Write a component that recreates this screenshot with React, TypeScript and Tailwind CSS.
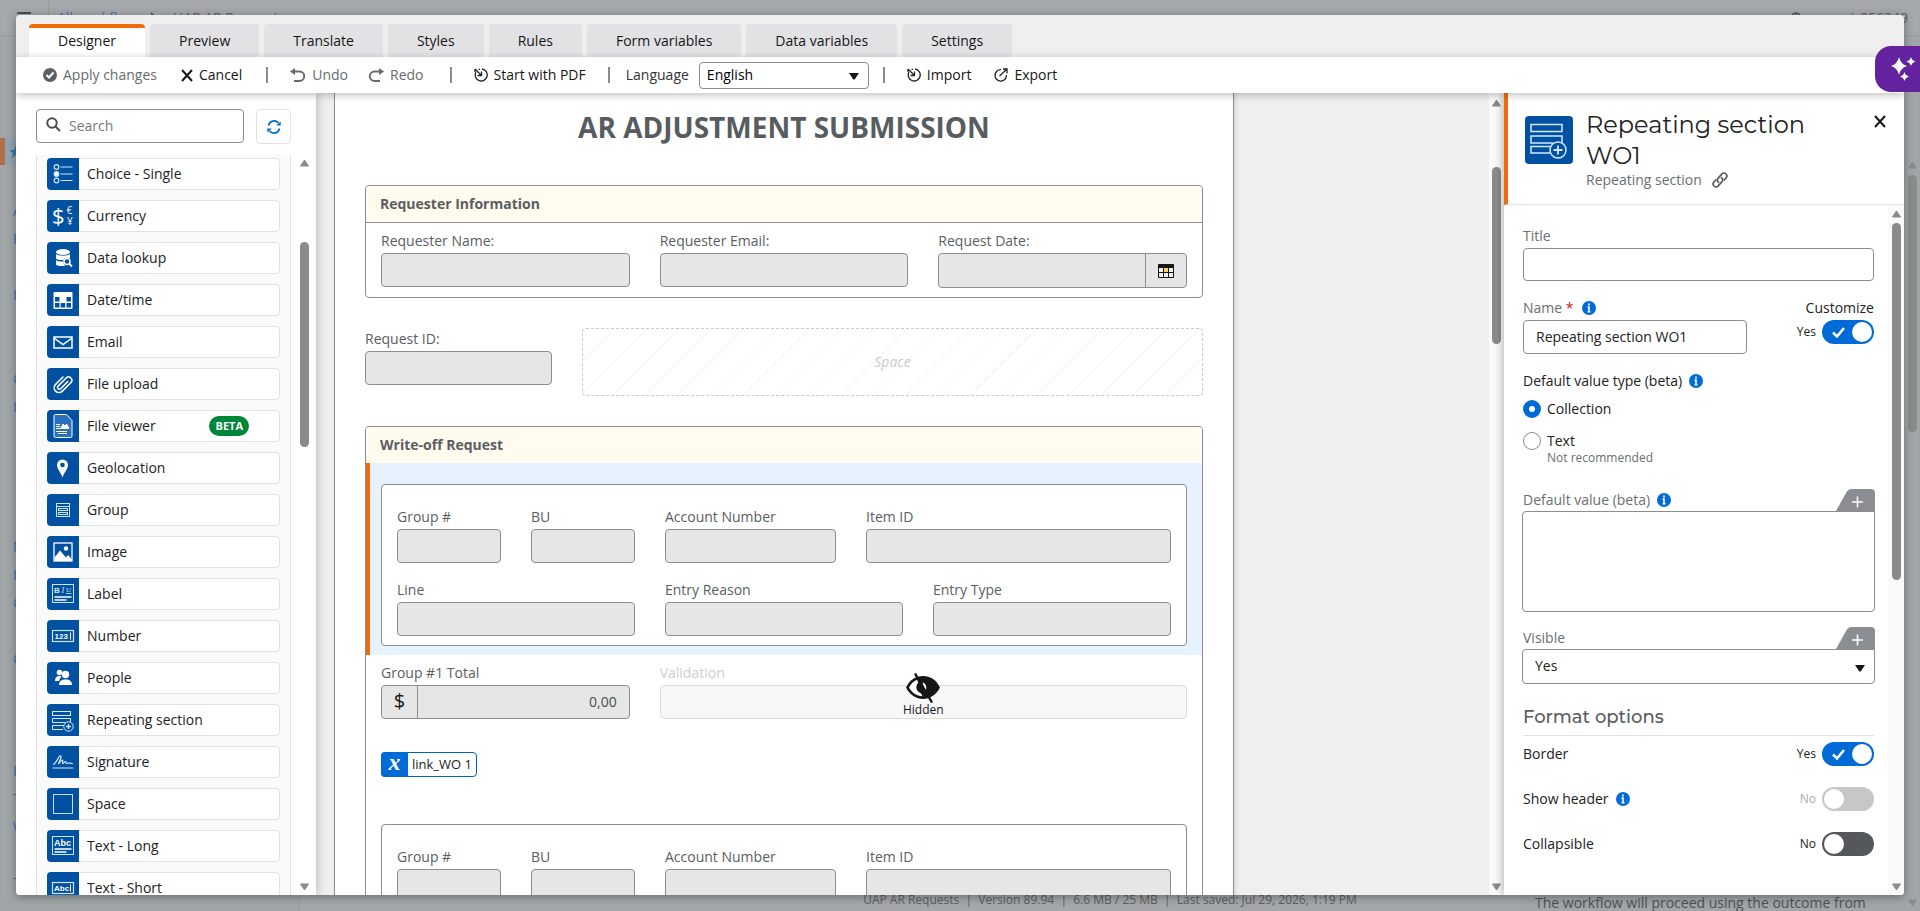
import React, { useId } from 'react';
import clsx from 'clsx';

const TABS = ['Designer', 'Preview', 'Translate', 'Styles', 'Rules', 'Form variables', 'Data variables', 'Settings'];

const line = { fill: 'none', stroke: '#cfe4fb', strokeWidth: 1.2 };

const SectionGlyph = () => (
  <g fill="none" stroke="#d5e8fc" strokeWidth="1">
    <rect x="5.5" y="7.5" width="18" height="4" />
    <path d="M23.5 18v-3.500h-18v4h13M17 21.500H5.500v4H16" />
    <circle cx="21.500" cy="22.500" r="4.700" />
    <path d="M21.500 20v5M19 22.500h5" strokeWidth="1.300" />
  </g>
);

const CONTROLS: { name: string; beta?: boolean; icon: React.ReactNode }[] = [
  {
    name: 'Choice - Single',
    icon: (
      <g {...line}>
        <circle cx="9.500" cy="9" r="2.300" />
        <circle cx="9.500" cy="16" r="2.300" fill="#fff" />
        <circle cx="9.500" cy="22.500" r="2.300" />
        <path d="M13.500 9h12M13.500 16h12M13.500 22.500h12" />
      </g>
    ),
  },
  {
    name: 'Currency',
    icon: (
      <g fill="#fff" fontFamily="Open Sans, sans-serif">
        <text x="5" y="24" fontSize="22">$</text>
        <text x="19.500" y="14" fontSize="10">€</text>
        <text x="20" y="25" fontSize="10">¥</text>
      </g>
    ),
  },
  {
    name: 'Data lookup',
    icon: (
      <g>
        <ellipse cx="16" cy="10" rx="7" ry="3" fill="#fff" />
        <path d="M9 12c2 2.200 12 2.200 14 0v4.500c-2-1.500-6-.5-6.500 1.500-3 .2-6.500-.2-7.500-1.500zM9 18c1.500 1.600 5 1.700 7.300 1.500 0 1.800.7 3.200 2 4.200-3 .8-8 .5-9.300-1.200z" fill="#fff" />
        <circle cx="20" cy="19.500" r="3" fill="none" stroke="#fff" strokeWidth="1.500" />
        <path d="M22 21.500l3 3" stroke="#fff" strokeWidth="1.800" />
      </g>
    ),
  },
  {
    name: 'Date/time',
    icon: (
      <g>
        <rect x="6.500" y="8" width="19" height="17" rx="1" fill="#fff" />
        <g fill="#0051a2">
          <rect x="8" y="13" width="4.500" height="4.500" />
          <rect x="19.500" y="13" width="4.500" height="4.500" />
          <rect x="8" y="19" width="4.500" height="4.500" />
          <rect x="13.700" y="19" width="4.500" height="4.500" />
          <rect x="19.500" y="19" width="4.500" height="4.500" />
        </g>
      </g>
    ),
  },
  {
    name: 'Email',
    icon: (
      <g fill="none" stroke="#fff" strokeWidth="1.500">
        <rect x="7" y="11" width="18" height="11" />
        <path d="M7 12l9 6.500 9-6.500" />
      </g>
    ),
  },
  {
    name: 'File upload',
    icon: (
      <g fill="none" stroke="#fff" strokeWidth="1.500" strokeLinecap="round" transform="rotate(45 16 16)">
        <path d="M11 11v10.500a4.800 4.800 0 0 0 9.600 0V9.500a3.300 3.300 0 0 0-6.600 0v11.500a1.800 1.800 0 0 0 3.600 0V11" />
      </g>
    ),
  },
  {
    name: 'File viewer',
    beta: true,
    icon: (
      <g fill="none" stroke="#fff" strokeWidth="1">
        <path d="M8.500 4.500h11l5.500 6V26a1.500 1.500 0 0 1-1.500 1.500h-15A1.500 1.500 0 0 1 7 26V6a1.500 1.500 0 0 1 1.500-1.500z" fill="#2a70bd" />
        <path d="M9 14.500h4M9 16.500h4M9 18.500h13M9 21.500h11M11 23.500h9" />
        <path d="M14 18l2-4 2 2 1.500-2 2.500 4z" fill="#fff" />
      </g>
    ),
  },
  {
    name: 'Geolocation',
    icon: (
      <path
        d="M15.500 7.500a5.500 5.500 0 0 0-5.500 5.500C10 17 14 20.500 15.500 25.500c1.500-5 5.500-8.500 5.500-12.500A5.500 5.500 0 0 0 15.500 7.500zm0 3.200a2.300 2.300 0 1 1 0 4.600 2.300 2.300 0 0 1 0-4.600z"
        fill="#fff"
      />
    ),
  },
  {
    name: 'Group',
    icon: (
      <g {...line} strokeWidth={1}>
        <rect x="9.500" y="9.500" width="13" height="13" />
        <path d="M9.500 12.500h13" />
        <rect x="11.500" y="14.500" width="9" height="2" />
        <rect x="11.500" y="18.500" width="9" height="2" />
      </g>
    ),
  },
  {
    name: 'Image',
    icon: (
      <g>
        <rect x="7" y="7" width="18" height="18" fill="none" stroke="#fff" strokeWidth="1.300" />
        <path d="M7.500 21.500l5.500-7 6 7 2-2.500 4 4.500V25H7.500z" fill="#fff" />
        <circle cx="19" cy="12.500" r="2.200" fill="#fff" />
      </g>
    ),
  },
  {
    name: 'Label',
    icon: (
      <g>
        <rect x="5.500" y="6.500" width="21" height="18" {...line} strokeWidth={1} />
        <g fill="#d5e8fc" fontSize="8">
          <text x="7" y="14.500" fontFamily="Liberation Sans, sans-serif" fontWeight="700">B</text>
          <text x="14.500" y="14.500" fontFamily="Liberation Serif, serif" fontStyle="italic">I</text>
          <text x="19" y="14" fontSize="7" fontFamily="Liberation Serif, serif">U</text>
        </g>
        <path d="M19 15.500h5.500" stroke="#d5e8fc" strokeWidth=".8" />
        <path d="M7.500 19h17M7.500 22h12" stroke="#fff" strokeWidth="1.300" />
      </g>
    ),
  },
  {
    name: 'Number',
    icon: (
      <g>
        <rect x="5.500" y="10.500" width="21" height="11" {...line} />
        <text x="7.500" y="19" fill="#fff" fontSize="8" fontWeight="700" fontFamily="Liberation Sans, sans-serif">123</text>
        <path d="M23.500 12.500v7" stroke="#fff" strokeWidth="1" />
      </g>
    ),
  },
  {
    name: 'People',
    icon: (
      <g fill="#fff">
        <circle cx="12.500" cy="10.500" r="2.800" />
        <path d="M8 19c0-3.200 1.500-5 4.500-5 1 0 1.500.3 2 1-1.500 1-2 2-2.300 4z" />
        <circle cx="18.500" cy="12.500" r="3.700" />
        <path d="M12 23c0-3.500 2-5.500 6.500-5.500S25 19.500 25 23z" />
      </g>
    ),
  },
  { name: 'Repeating section', icon: <SectionGlyph /> },
  {
    name: 'Signature',
    icon: (
      <g {...line} strokeLinecap="round" strokeLinejoin="round">
        <path d="M6.500 18.500c2-1 4-5 5.500-7.500 1-1.500 2.500-1.500 2 .5-.5 2-2 4-2.500 6.500 1.500-2 3-4 4-4s-.7 3.500.3 3.500 1.700-1.800 2.700-1.800.3 1.800 1.500 1.800 1.500-.8 2.500-.5 1.500.5 3 .5" />
        <path d="M6 22h20" />
      </g>
    ),
  },
  {
    name: 'Space',
    icon: (
      <g fill="none" stroke="#fff">
        <rect x="6.500" y="6.500" width="19" height="19" opacity=".6" />
        <rect x="6.500" y="6.500" width="19" height="19" strokeDasharray="1 1" />
      </g>
    ),
  },
  {
    name: 'Text - Long',
    icon: (
      <g>
        <rect x="5.500" y="6.500" width="21" height="18" {...line} strokeWidth={1} />
        <text x="7" y="15.500" fill="#fff" fontSize="9" fontWeight="700" fontFamily="Liberation Sans, sans-serif">Abc</text>
        <path d="M7.500 19h17M7.500 22h12" stroke="#fff" strokeWidth="1.300" />
      </g>
    ),
  },
  {
    name: 'Text - Short',
    icon: (
      <g>
        <rect x="5.500" y="10.500" width="21" height="11" {...line} />
        <text x="7" y="19" fill="#fff" fontSize="8" fontWeight="700" fontFamily="Liberation Sans, sans-serif">Abc</text>
        <path d="M23.500 12.500v7" stroke="#fff" strokeWidth="1" />
      </g>
    ),
  },
];

/* Drawn scroll bar: arrow, thumb, arrow */
const Scrollbar = ({ thumb, className }: { thumb: string; className?: string }) => (
  <div aria-hidden="true" className={clsx('flex shrink-0 flex-col items-center', className)}>
    <svg width="9" height="8" viewBox="0 0 9 8" className="shrink-0">
      <path d="M4.500 1L8.500 7H.5z" fill="#8b8b8b" stroke="#8b8b8b" strokeLinejoin="round" />
    </svg>
    <div className="min-h-0 flex-1">
      <div className={clsx('w-[9px] rounded-full bg-[#8b8b8b]', thumb)} />
    </div>
    <svg width="9" height="8" viewBox="0 0 9 8" className="shrink-0">
      <path d="M4.500 7L8.500 1H.5z" fill="#8b8b8b" stroke="#8b8b8b" strokeLinejoin="round" />
    </svg>
  </div>
);

const Caret = () => (
  <svg width="10" height="7" viewBox="0 0 10 7" className="pointer-events-none absolute top-1/2 right-2.5 -mt-0.5">
    <path d="M0 0h10L6 6q-1 1-2 0z" fill="#161616" />
  </svg>
);

const Divider = () => <span className="h-4 w-0.5 bg-[#8c8c8c]" />;

const InfoIcon = () => (
  <svg width="14" height="14" viewBox="0 0 14 14">
    <circle cx="7" cy="7" r="7" fill="#006bd6" />
    <path d="M7 2.500v2M7 5.500v5M5.500 6H7.500M5.500 10.800h3" stroke="#fff" strokeWidth="1.600" />
  </svg>
);

const CloseIcon = () => (
  <svg width="12" height="13" viewBox="0 0 12 13" fill="none" stroke="#161616" strokeWidth="2">
    <path d="M1 1l10 11M11 1L1 12" />
  </svg>
);

const ImportIcon = () => (
  <svg width="14" height="14" viewBox="0 0 14 14" fill="none" stroke="#222" strokeWidth="1.300">
    <path d="M2 4a6 6 0 1 0 6-3M1 1l6.500 6.500M7.500 3.500v4h-4M1 1v3" />
    <path d="M4.500 1.800L6 1" />
  </svg>
);

const ExportIcon = () => (
  <svg width="14" height="14" viewBox="0 0 14 14" fill="none" stroke="#222" strokeWidth="1.300">
    <path d="M7 1.700A5.700 5.700 0 1 0 12.400 7M5.500 8L13 1M9 1h4v4.500" />
  </svg>
);

const UndoIcon = ({ flip }: { flip?: boolean }) => (
  <svg
    width="16"
    height="15"
    viewBox="0 0 16 15"
    fill="none"
    stroke="#696c6e"
    strokeWidth="2"
    className={clsx(flip && '-scale-x-100')}
  >
    <path d="M2 3.500h7.500a4.700 4.700 0 0 1 0 9.500H4" />
    <path d="M0 3.500L5 0v7z" fill="#696c6e" stroke="none" />
  </svg>
);

const ToolButton = ({ icon, label, muted }: { icon: React.ReactNode; label: string; muted?: boolean }) => (
  <button type="button" className={clsx('flex items-center gap-1.5', muted ? 'text-[#696c6e]' : 'text-[#161616]')}>
    {icon}
    {label}
  </button>
);

/* Form canvas field */
const Field = ({ label, className }: { label: string; className?: string }) => {
  const id = useId();
  return (
    <div className={className}>
      <label htmlFor={id} className="mb-0.5 block leading-5">{label}</label>
      <input id={id} readOnly className="block h-[34px] w-full rounded border border-[#8b8d8f] bg-[#e6e6e6]" />
    </div>
  );
};

const WriteOffFields = () => (
  <div className="grid grid-cols-12 gap-x-[30px] gap-y-[17px] rounded border border-[#8b8d8f] bg-white px-[15px] pt-[22px] pb-[9px]">
    <Field label="Group #" className="col-span-2" />
    <Field label="BU" className="col-span-2" />
    <Field label="Account Number" className="col-span-3" />
    <Field label="Item ID" className="col-span-5" />
    <Field label="Line" className="col-span-4" />
    <Field label="Entry Reason" className="col-span-4" />
    <Field label="Entry Type" className="col-span-4" />
  </div>
);

const Toggle = ({ on, disabled, label }: { on?: boolean; disabled?: boolean; label: string }) => (
  <span className="flex items-center gap-1.5 text-xs">
    <span className={disabled ? 'text-[#a9abad]' : 'text-[#222]'}>{on ? 'Yes' : 'No'}</span>
    <button
      type="button"
      role="switch"
      aria-checked={!!on}
      aria-label={label}
      disabled={disabled}
      className={clsx(
        'flex h-6 w-[52px] items-center rounded-full px-0.5',
        on ? 'justify-between bg-[#006bd6] pl-2.5' : disabled ? 'bg-[#c6c7c9]' : 'bg-[#54585c]'
      )}
    >
      {on && (
        <svg width="13" height="11" viewBox="0 0 13 11" fill="none" stroke="#fff" strokeWidth="2.500">
          <path d="M1 5.500l4 4L12 1" />
        </svg>
      )}
      <span className="h-5 w-5 rounded-full bg-white" />
    </button>
  </span>
);

const PlusTab = ({ label }: { label: string }) => (
  <button type="button" aria-label={label} className="block">
    <svg width="39" height="22" viewBox="0 0 39 22">
      <path d="M0 22L10 4q2-4 6-4h19q4 0 4 4v18z" fill="#8a8e93" />
      <path d="M21.500 7.500v11M16 13h11" stroke="#fff" strokeWidth="1.500" />
    </svg>
  </button>
);

const Sidebar = () => (
  <aside className="z-10 flex w-[300px] shrink-0 bg-white pl-5 shadow-[2px_0_8px_rgba(0,0,0,0.2)]">
    <div className="flex min-w-0 flex-1 flex-col pt-4">
      <div className="flex gap-3">
        <div className="relative flex-1">
          <svg width="15" height="16" viewBox="0 0 15 16" fill="none" stroke="#4a4c4e" strokeWidth="2" className="absolute top-2 left-2.5">
            <circle cx="6" cy="6" r="4.700" />
            <path d="M9.500 9.500l4.500 4.500" />
          </svg>
          <input
            aria-label="Search"
            placeholder="Search"
            className="block h-[34px] w-full rounded border border-[#8b8d8f] pb-0.5 pl-8 placeholder:text-[#757779]"
          />
        </div>
        <button
          type="button"
          aria-label="Refresh"
          className="flex h-[35px] w-[35px] items-center justify-center rounded border border-[#e0e2e4]"
        >
          <svg width="16" height="16" viewBox="0 0 16 16" fill="none" stroke="#006bd6" strokeWidth="1.700">
            <path d="M2.500 6.500a5.700 5.700 0 0 1 10-2.500M13.500 9.500a5.700 5.700 0 0 1-10 2.500" />
            <path d="M14.700 6.500h-4.500l4.500-4zM1.300 9.500h4.500l-4.500 4z" fill="#006bd6" stroke="none" />
          </svg>
        </button>
      </div>
      <ul className="mt-[11px] min-h-0 flex-1 overflow-hidden border-x border-[#e0e2e4] bg-[#fafafa] px-2.5 pt-[3px]">
        {CONTROLS.map((item) => (
          <li key={item.name} className="mb-2.5 flex h-8 items-center rounded border border-[#e0e2e4] bg-white">
            <span className="-my-px -ml-px h-8 w-8 overflow-hidden rounded-l bg-[#0051a2]">
              <svg width="32" height="32" viewBox="0 0 32 32">{item.icon}</svg>
            </span>
            <span className="ml-2 text-[#222]">{item.name}</span>
            {item.beta && (
              <span className="mr-[30px] ml-auto rounded-full bg-[#008638] px-1.5 text-[11px] leading-5 font-bold text-white">
                BETA
              </span>
            )}
          </li>
        ))}
      </ul>
    </div>
    <Scrollbar className="w-[25px] pt-[66px] pb-1 pl-0.5" thumb="mt-[75px] h-[205px]" />
  </aside>
);

const FormCanvas = () => (
  <main className="min-w-0 flex-1 overflow-hidden bg-[#efefef] pl-[18px]">
    <div className="min-h-full w-full max-w-[900px] border-x border-[#8b8d8f] bg-white px-[30px] pt-[15px] text-[#5a5e61] shadow-[2px_0_4px_rgba(0,0,0,0.1)]">
      <h1 className="text-center text-[28px] leading-[38px] font-bold text-[#575c60]">AR ADJUSTMENT SUBMISSION</h1>

      <section className="mt-[39px] rounded border border-[#8b8d8f]">
        <h2 className="rounded-t border-b border-[#8b8d8f] bg-[#fffbee] pl-3.5 leading-9 font-bold">Requester Information</h2>
        <div className="grid grid-cols-3 gap-[30px] px-[15px] pt-2 pb-[9px]">
          <Field label="Requester Name:" />
          <Field label="Requester Email:" />
          <div>
            <label htmlFor="request-date" className="mb-0.5 block leading-5">Request Date:</label>
            <div className="flex h-[35px] rounded border border-[#8b8d8f] bg-[#e6e6e6]">
              <input id="request-date" readOnly className="min-w-0 flex-1" />
              <button type="button" aria-label="Pick a date" className="flex w-[41px] items-center justify-center border-l border-[#8b8d8f]">
                <svg width="16" height="14" viewBox="0 0 16 14">
                  <rect width="16" height="14" rx="1" fill="#161616" />
                  <g fill="#f2f2f2">
                    <rect x="1" y="4" width="4" height="4" />
                    <rect x="6" y="4" width="4" height="4" fill="#ffd35a" />
                    <rect x="11" y="4" width="4" height="4" />
                    <rect x="1" y="9" width="4" height="4" />
                    <rect x="6" y="9" width="4" height="4" />
                    <rect x="11" y="9" width="4" height="4" />
                  </g>
                </svg>
              </button>
            </div>
          </div>
        </div>
      </section>

      <div className="mt-[30px] grid grid-cols-4 gap-[30px]">
        <Field label="Request ID:" className="pt-px" />
        <div className="col-span-3 flex h-[68px] items-center justify-center rounded border border-dashed border-[#c8cacc] bg-[repeating-linear-gradient(135deg,#fff_0px,#fff_21px,#f5f5f5_22px,#fff_23px)] text-[#c8cacc] italic">
          Space
        </div>
      </div>

      <section className="mt-[30px] rounded border border-[#8b8d8f]">
        <h2 className="rounded-t bg-[#fffbee] pl-3.5 leading-9 font-bold">Write-off Request</h2>
        <div className="border-l-4 border-[#f26a0a] bg-[#e6f2ff] pt-[21px] pr-[15px] pb-[9px] pl-[11px]">
          <WriteOffFields />
        </div>
        <div className="px-[15px] pt-2">
          <div className="grid grid-cols-3 gap-[30px]">
            <div>
              <label htmlFor="group-total" className="mb-0.5 block leading-5">Group #1 Total</label>
              <div className="flex h-[34px] items-center rounded border border-[#8b8d8f] bg-[#e6e6e6]">
                <span className="h-full w-9 border-r border-[#8b8d8f] text-center text-xl leading-[30px] text-[#161616]">$</span>
                <input id="group-total" readOnly defaultValue="0,00" className="min-w-0 flex-1 pr-3 text-right text-[#4a4d50]" />
              </div>
            </div>
            <div className="relative col-span-2">
              <label htmlFor="validation" className="mb-0.5 block leading-5 text-[#cdcecf]">Validation</label>
              <input id="validation" readOnly className="block h-[34px] w-full rounded border border-[#dcdddd] bg-[#f7f7f7]" />
              <div className="absolute inset-0 top-2.5 flex flex-col items-center text-xs leading-[14px] text-[#161616]">
                <svg width="36" height="30" viewBox="0 0 36 30">
                  <path d="M1 14.500C5 6.500 11 3 18 3s13 3.500 17 11.500C31 22 25 26 18 26S5 22 1 14.500z" fill="#161616" />
                  <path d="M12.200 6.800C8.500 8.200 5.700 11 4 14.500c3 5.300 7.500 8.300 13.500 8.700l-1.600-3a6.300 6.300 0 0 1-2.700-10.500z" fill="#fff" />
                  <path d="M17.500 9.500c4 .5 5 6.500 2.200 9z" fill="#fff" />
                  <path d="M10 .5l17 29" stroke="#161616" strokeWidth="2.400" />
                </svg>
                Hidden
              </div>
            </div>
          </div>
          <div className="mt-[33px] mb-[47px] inline-flex h-[25px] items-center rounded border border-[#0062b8] bg-white pr-1 text-[13px] text-[#222]">
            <span className="-my-px -ml-px mr-1 h-[25px] w-[27px] rounded-l bg-[#006bd6] text-center font-['Liberation_Serif',serif] text-2xl leading-[20px] font-bold text-white italic">
              x
            </span>
            link_WO 1
          </div>
          <WriteOffFields />
        </div>
      </section>
    </div>
  </main>
);

const Properties = () => (
  <aside className="z-10 flex w-[400px] shrink-0 flex-col bg-white text-[#222] shadow-[-2px_0_8px_rgba(0,0,0,0.25)]">
    <header className="flex h-[112px] border-b border-l-4 border-b-[#e0e2e4] border-l-[#f26a0a] pt-[23px] pr-[18px] pl-[17px]">
      <span className="h-12 w-12 rounded-sm bg-[#0051a2]">
        <svg width="48" height="48" viewBox="0 0 48 48" fill="none" stroke="#d5e8fc" strokeWidth="1.500">
          <path d="M6 8.500h31v7H6zM37 27v-7H6v7h22M25 30.500H6V37h19" />
          <circle cx="33" cy="34" r="8" />
          <path d="M33 29.500v9M28.500 34h9" strokeWidth="1.800" />
        </svg>
      </span>
      <div className="-mt-[7px] ml-[13px] w-[240px]">
        <h2 className="font-[Montserrat,Inter,sans-serif] text-2xl leading-[31px] font-normal">Repeating section WO1</h2>
        <p className="flex items-center gap-2.5 leading-[18px] text-[#6b6e70]">
          Repeating section
          <svg width="16" height="16" viewBox="0 0 16 16" fill="none" stroke="#55585b" strokeWidth="1.600" strokeLinecap="round">
            <path d="M6.500 10.300a3 3 0 0 1-.3-4.200l3.600-4a2.900 2.900 0 0 1 4.200 4l-1.700 2" />
            <path d="M9.500 5.700a3 3 0 0 1 .3 4.200l-3.600 4a2.900 2.900 0 0 1-4.200-4l1.700-2" />
          </svg>
        </p>
      </div>
      <button type="button" aria-label="Close" className="ml-auto -mt-px self-start">
        <CloseIcon />
      </button>
    </header>

    <div className="flex min-h-0 flex-1">
      <div className="min-w-0 flex-1 overflow-hidden pt-[21px] pr-3.5 pl-[19px]">
        <label htmlFor="title" className="mb-0.5 block leading-5 text-[#6b6e70]">Title</label>
        <input id="title" className="block h-[33px] w-full rounded border border-[#8b8d8f]" />

        <div className="mt-[17px] flex justify-between">
          <div className="w-[224px]">
            <div className="mb-0.5 flex items-center gap-2 leading-5">
              <label htmlFor="name" className="text-[#6b6e70]">
                Name <span className="text-[#d01818]">*</span>
              </label>
              <InfoIcon />
            </div>
            <input id="name" defaultValue="Repeating section WO1" className="block h-[34px] w-full rounded border border-[#8b8d8f] px-3 pb-0.5" />
          </div>
          <div className="flex flex-col items-end gap-0.5 leading-5">
            Customize
            <Toggle on label="Customize" />
          </div>
        </div>

        <fieldset className="mt-[17px]">
          <legend className="flex items-center gap-[7px] leading-5">
            Default value type (beta) <InfoIcon />
          </legend>
          <label className="mt-2 flex items-center gap-1.5 leading-5">
            <input
              type="radio"
              name="value-type"
              defaultChecked
              className="h-[18px] w-[18px] appearance-none rounded-full border border-[#8b8d8f] checked:border-[6px] checked:border-[#006bd6]"
            />
            Collection
          </label>
          <label className="mt-3 flex items-center gap-1.5 leading-5">
            <input
              type="radio"
              name="value-type"
              className="h-[18px] w-[18px] appearance-none rounded-full border border-[#8b8d8f] checked:border-[6px] checked:border-[#006bd6]"
            />
            Text
          </label>
          <p className="ml-6 text-xs leading-[14px] text-[#6b6e70]">Not recommended</p>
        </fieldset>

        <div className="-mx-px mt-6">
          <div className="flex items-end justify-between">
            <div className="flex items-center gap-[7px] pl-px leading-[22px]">
              <label htmlFor="default-value" className="text-[#6b6e70]">Default value (beta)</label>
              <InfoIcon />
            </div>
            <PlusTab label="Add variable to default value" />
          </div>
          <textarea id="default-value" className="block h-[101px] w-full resize-none rounded rounded-tr-none border border-[#8b8d8f]" />
        </div>

        <div className="-mx-px mt-[15px]">
          <div className="flex items-end justify-between">
            <label htmlFor="visible" className="pl-px leading-[22px] text-[#6b6e70]">Visible</label>
            <PlusTab label="Add variable to visible" />
          </div>
          <div className="relative">
            <select id="visible" className="block h-[35px] w-full appearance-none rounded rounded-tr-none border border-[#8b8d8f] bg-white px-3 pb-0.5">
              <option>Yes</option>
            </select>
            <Caret />
          </div>
        </div>

        <h3 className="mt-[21px] border-b border-[#e0e2e4] pb-1.5 font-[Montserrat,Inter,sans-serif] text-lg leading-6 font-medium text-[#5a5d60]">
          Format options
        </h3>
        <div className="mt-1.5 flex flex-col gap-[21px]">
          <div className="flex items-center justify-between">
            Border <Toggle on label="Border" />
          </div>
          <div className="flex items-center justify-between">
            <span className="flex items-center gap-[7px]">Show header <InfoIcon /></span>
            <Toggle disabled label="Show header" />
          </div>
          <div className="flex items-center justify-between">
            Collapsible <Toggle label="Collapsible" />
          </div>
        </div>
      </div>
      <Scrollbar className="w-4 bg-[#fafafa] pt-[5px] pb-1" thumb="mt-[5px] h-[357px]" />
    </div>
  </aside>
);

/* The workflow page that stays dimmed behind the dialog */
const NAV = ['A', 'F', '', 'I', '', '', 'C', 'I', '', '', '', '', 'M', 'I', 'C', '', 'C', '', '', '', 'I', 'T', 'W', '', 'T'];

const Backdrop = () => (
  <div className="flex h-full flex-col bg-[#a4a8aa] text-[#5b6063]">
    <div className="flex h-9 items-center border-b border-[#969b9e] pr-3 pl-[17px]">
      <svg width="14" height="12" viewBox="0 0 14 12" stroke="#4a4f52" strokeWidth="2">
        <path d="M0 1h14M0 6h14M0 11h14" />
      </svg>
      <span className="ml-[17px] h-full border-l border-[#969b9e]" />
      <a href="#workflows" className="ml-2 text-[#3f74a8]">All workflows</a>
      <svg width="6" height="12" viewBox="0 0 6 12" fill="#4a4f52" className="ml-2">
        <path d="M0 0l6 6-6 6z" />
      </svg>
      <span className="ml-4">UAP AR Requests</span>
      <svg width="12" height="12" viewBox="0 0 12 12" fill="none" stroke="#4a4f52" strokeWidth="1.500" className="ml-auto">
        <circle cx="6" cy="6" r="5" />
        <path d="M6 1v10M1 6h10" />
      </svg>
      <span className="ml-0.5">support-256249</span>
    </div>
    <div className="flex min-h-0 flex-1">
      <nav className="w-[300px] border-r border-[#999ea1] bg-[#a0a5a8] pt-[102px]">
        <div className="flex h-[27px] items-center border-l-[5px] border-[#b06f48] bg-[#93a3b0] pl-1">
          <svg width="14" height="14" viewBox="0 0 14 14" fill="#3f74a8">
            <path d="M7 0l2 5h5l-4 3 1.500 5L7 10l-4.500 3L4 8 0 5h5z" />
          </svg>
        </div>
        <ul className="pt-8 pl-[13px] text-[#3f74a8]">
          {NAV.map((letter, i) => (
            <li key={i} className="h-7 leading-7">{letter}</li>
          ))}
        </ul>
      </nav>
      <div className="flex min-w-0 flex-1 items-end justify-center pb-px pl-[400px]">
        <p className="text-xs leading-5 whitespace-pre">UAP AR Requests  |  Version 89.94  |  6.6 MB / 25 MB  |  Last saved: Jul 29, 2026, 1:19 PM</p>
      </div>
      <div className="flex w-[384px] flex-col justify-end bg-[#a0a5a8] pl-[15px]">
        <p className="leading-4 text-[#4d5255]">The workflow will proceed using the outcome from</p>
      </div>
      <Scrollbar className="w-4 bg-[#a0a5a8] pt-[125px] pb-1" thumb="mt-[6px] h-[257px]" />
    </div>
  </div>
);

const App = () => (
  <div className="relative h-screen overflow-hidden font-['Open_Sans',sans-serif] text-sm">
    <Backdrop />
    <div
      role="dialog"
      aria-label="Form designer"
      className="absolute inset-4 top-[15px] isolate flex flex-col overflow-hidden rounded bg-[#efefef] shadow-[0_2px_10px_rgba(0,0,0,0.35)]"
    >
      <div role="tablist" className="flex h-[42px] shrink-0 items-end gap-[5px] pl-[13px]">
        {TABS.map((tab, i) => (
          <button
            key={tab}
            type="button"
            role="tab"
            aria-selected={i === 0}
            className={clsx(
              'h-[33px] px-[29px] text-[#161616]',
              i === 0 ? 'rounded-t-sm border-t-4 border-[#f26a0a] bg-white pb-1' : 'rounded-t bg-[#e2e2e4]'
            )}
          >
            {tab}
          </button>
        ))}
      </div>

      <div className="z-20 flex h-9 shrink-0 items-center bg-white pl-[27px] shadow-[0_2px_8px_rgba(0,0,0,0.25)]">
        <div className="flex items-center gap-6">
          <ToolButton
            muted
            label="Apply changes"
            icon={
              <svg width="14" height="14" viewBox="0 0 14 14">
                <circle cx="7" cy="7" r="7" fill="#5d6062" />
                <path d="M3.500 7l2.500 2.500 4.500-5" fill="none" stroke="#fff" strokeWidth="2" />
              </svg>
            }
          />
          <ToolButton label="Cancel" icon={<CloseIcon />} />
          <Divider />
        </div>
        <div className="ml-[22px] flex items-center gap-5">
          <ToolButton muted label="Undo" icon={<UndoIcon />} />
          <ToolButton muted label="Redo" icon={<UndoIcon flip />} />
        </div>
        <div className="ml-[26px] flex items-center gap-[22px]">
          <Divider />
          <ToolButton label="Start with PDF" icon={<ImportIcon />} />
          <Divider />
        </div>
        <label htmlFor="language" className="ml-4 text-[#333]">Language</label>
        <div className="relative mr-3.5 ml-2.5 w-[170px]">
          <select id="language" className="block h-[27px] w-full appearance-none rounded border border-[#8b8d8f] bg-white px-[7px]">
            <option>English</option>
          </select>
          <Caret />
        </div>
        <Divider />
        <div className="ml-[22px] flex gap-[23px]">
          <ToolButton label="Import" icon={<ImportIcon />} />
          <ToolButton label="Export" icon={<ExportIcon />} />
        </div>
      </div>

      <div className="flex min-h-0 flex-1">
        <Sidebar />
        <FormCanvas />
        <Scrollbar className="w-[15px] bg-[#fafafa] pt-1.5 pb-1" thumb="mt-[60px] h-[177px]" />
        <Properties />
      </div>
    </div>

    <button
      type="button"
      aria-label="Assistant"
      className="absolute top-[46px] right-0 z-10 flex h-[46px] w-[45px] items-center justify-center rounded-l-2xl bg-[#64239e] pl-2.5"
    >
      <svg width="26" height="26" viewBox="0 0 26 26" fill="#fff">
        <path d="M9 1q1.500 7 8 9-6.500 2-8 9-1.500-7-8-9 6.500-2 8-9zM21 1q.8 3.500 4.500 4.500Q21.800 6.500 21 10q-.8-3.500-4.500-4.500Q20.200 4.500 21 1zM14.500 16q.8 3.500 4.500 4.500-3.700 1-4.500 4.500-.8-3.500-4.500-4.500 3.700-1 4.500-4.500z" />
      </svg>
    </button>
  </div>
);

export default App;
